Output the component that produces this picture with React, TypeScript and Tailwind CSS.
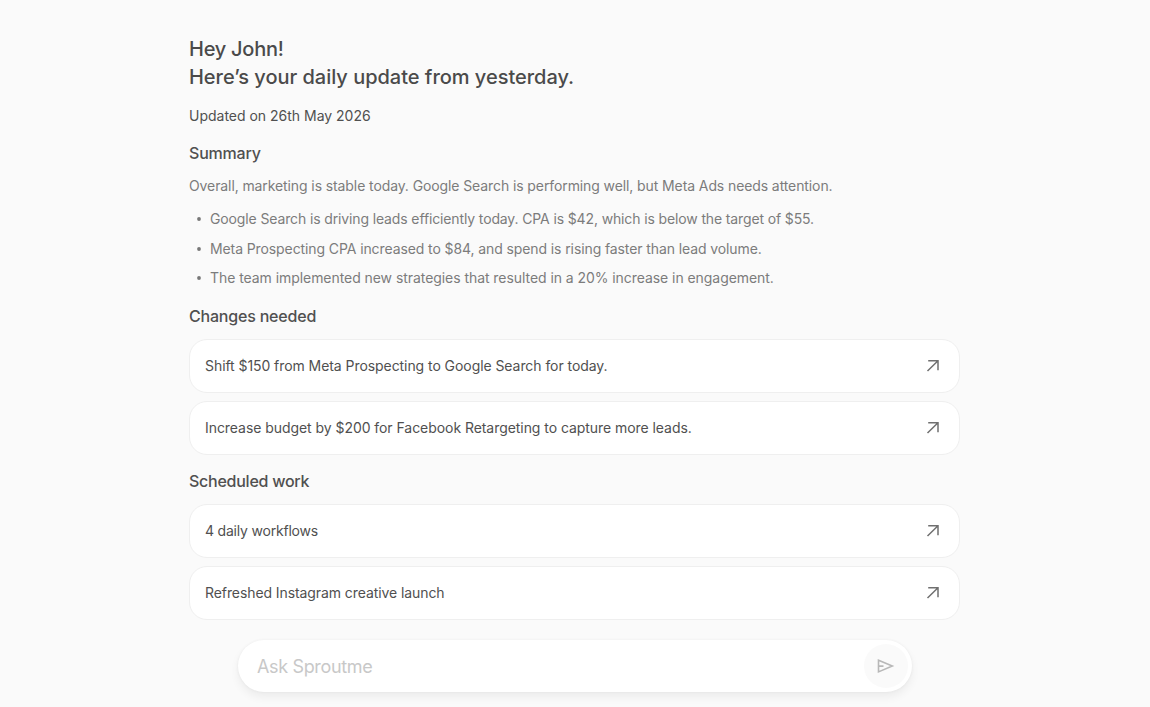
import type { FC } from 'react';

// -----------------------------------------------------------------------------
// Data
// -----------------------------------------------------------------------------

type TextItem = {
  text: string;
  tracking: string;
};

const HIGHLIGHTS: TextItem[] = [
  {
    text: 'Google Search is driving leads efficiently today. CPA is $42, which is below the target of $55.',
    tracking: 'tracking-[-0.13px]',
  },
  {
    text: 'Meta Prospecting CPA increased to $84, and spend is rising faster than lead volume.',
    tracking: 'tracking-[-0.1px]',
  },
  {
    text: 'The team implemented new strategies that resulted in a 20% increase in engagement.',
    tracking: 'tracking-[-0.06px]',
  },
];

const CHANGES: TextItem[] = [
  {
    text: 'Shift $150 from Meta Prospecting to Google Search for today.',
    tracking: 'tracking-[-0.065px]',
  },
  {
    text: 'Increase budget by $200 for Facebook Retargeting to capture more leads.',
    tracking: 'tracking-[-0.055px]',
  },
];

const SCHEDULED: TextItem[] = [
  { text: '4 daily workflows', tracking: 'tracking-[-0.2px]' },
  { text: 'Refreshed Instagram creative launch', tracking: 'tracking-[-0.085px]' },
];

// -----------------------------------------------------------------------------
// Components
// -----------------------------------------------------------------------------

const ArrowIcon: FC = () => (
  <svg width="14" height="14" viewBox="0 0 14 14" fill="none" stroke="#707070" strokeWidth="1.5">
    <path d="M1.5 12 12 1.7M2.2 1.7H12v9.6" />
  </svg>
);

const SendIcon: FC = () => (
  <svg
    width="18"
    height="16"
    viewBox="0 0 18 16"
    fill="none"
    stroke="#b8b8b8"
    strokeWidth="1.6"
    strokeLinejoin="miter"
  >
    <path d="M1.5 2.3v11.6L15.3 8.1zM1.5 8.1h5" />
  </svg>
);

const CardList: FC<{ items: TextItem[] }> = ({ items }) => (
  <div className="flex flex-col gap-2">
    {items.map(({ text, tracking }) => (
      <button
        key={text}
        type="button"
        className="flex h-[54px] w-full items-center justify-between rounded-[18px] border border-[#efefef] bg-white pr-[19px] pl-[15px] text-left text-[#505050]"
      >
        <span className={`whitespace-nowrap ${tracking}`}>{text}</span>
        <ArrowIcon />
      </button>
    ))}
  </div>
);

const App: FC = () => {
  return (
    <div className="flex h-[707px] w-full flex-col overflow-hidden bg-[#fafafa] font-['Inter',sans-serif] text-[14px] leading-5 text-[#505050]">
      <main className="ml-[189px] w-[771px] pt-[35px]">
        <h1 className="text-[20px] leading-7 font-medium whitespace-nowrap text-[#4a4a4a]">
          <span className="block tracking-[-0.25px]">Hey John!</span>
          <span className="block tracking-[-0.02px]">Here’s your daily update from yesterday.</span>
        </h1>
        <p className="mt-[15px] tracking-[-0.01px]">Updated on 26th May 2026</p>

        <h2 className="mt-[15px] text-base leading-6 font-medium tracking-[-0.2px]">Summary</h2>
        <p className="mt-[11px] whitespace-nowrap tracking-[-0.1px] text-[#7c7c7c]">
          Overall, marketing is stable today. Google Search is performing well, but Meta Ads needs
          attention.
        </p>
        <ul className="mt-[13.4px] flex flex-col gap-[9.5px] text-[#7c7c7c]">
          {HIGHLIGHTS.map(({ text, tracking }) => (
            <li key={text} className="flex items-center pl-2 whitespace-nowrap">
              <svg className="mr-[9px] h-1 w-1" viewBox="0 0 4 4" fill="#777">
                <circle cx="2" cy="2" r="1.9" />
              </svg>
              <span className={tracking}>{text}</span>
            </li>
          ))}
        </ul>

        <h2 className="mt-[15.6px] mb-[11px] text-base leading-6 font-medium tracking-[-0.2px]">
          Changes needed
        </h2>
        <CardList items={CHANGES} />

        <h2 className="mt-[14px] mb-[11px] text-base leading-6 font-medium tracking-[-0.25px]">
          Scheduled work
        </h2>
        <CardList items={SCHEDULED} />
      </main>

      <form className="mt-5 ml-[238px] flex h-[52px] w-[674px] shrink-0 items-center justify-between rounded-full bg-white pr-1 pl-[19px] shadow-[0_5px_10px_rgba(0,0,0,0.06),0_0_3px_rgba(0,0,0,0.05)]">
        <input
          type="text"
          placeholder="Ask Sproutme"
          aria-label="Ask Sproutme"
          className="h-full grow bg-transparent pt-px text-[18px] tracking-[-0.35px] outline-none placeholder:text-[#c8c8c8]"
        />
        <button
          type="button"
          aria-label="Send"
          className="flex h-11 w-11 items-center justify-center rounded-full bg-[#fafafa]"
        >
          <SendIcon />
        </button>
      </form>
    </div>
  );
};

export default App;
